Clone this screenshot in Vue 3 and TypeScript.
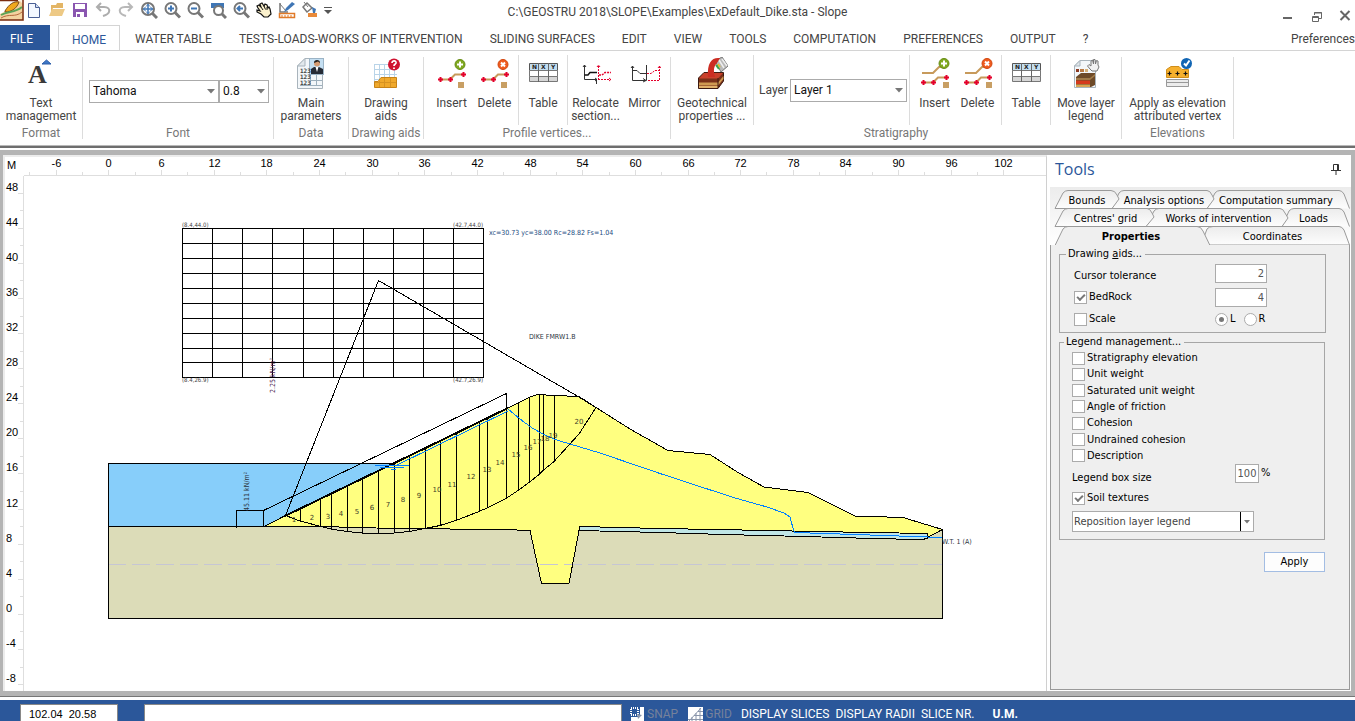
<script setup lang="ts">
import { ref } from 'vue'

type Pt = [number, number]

const menuTabs = ['WATER TABLE', 'TESTS-LOADS-WORKS OF INTERVENTION', 'SLIDING SURFACES', 'EDIT', 'VIEW', 'TOOLS', 'COMPUTATION', 'PREFERENCES', 'OUTPUT', '?']

const fontName = ref('Tahoma')
const fontSize = ref('0.8')
const layer = ref('Layer 1')
const legendAction = ref('Reposition layer legend')
const tolerance = ref('2')
const bedrockValue = ref('4')
const bedrock = ref(true)
const scale = ref(false)
const side = ref('L')
const boxSize = ref('100')
const soilTextures = ref(true)
const coords = ref('102.04  20.58')
const message = ref('')

const legendOptions = ref([
  { id: 'elev', label: 'Stratigraphy elevation', on: false },
  { id: 'unit', label: 'Unit weight', on: false },
  { id: 'sat', label: 'Saturated unit weight', on: false },
  { id: 'angle', label: 'Angle of friction', on: false },
  { id: 'coh', label: 'Cohesion', on: false },
  { id: 'undr', label: 'Undrained cohesion', on: false },
  { id: 'desc', label: 'Description', on: false },
])

/* Rulers: model units to canvas units */
const mx = (v: number) => Math.round(108.3 + v * 8.776) + 0.5
const my = (v: number) => Math.round(613.9 - v * 8.776) + 0.5
const xMajor = Array.from({ length: 19 }, (_, i) => -6 + i * 6)
const xMinor = Array.from({ length: 19 }, (_, i) => -9 + i * 6)
const yMajor = Array.from({ length: 15 }, (_, i) => 48 - i * 4)
const yMinor = Array.from({ length: 14 }, (_, i) => 46 - i * 4)

/* Centres' grid */
const gridX = [182.5, 212.5, 242.5, 272.5, 303.5, 333.5, 363.5, 393.5, 423.5, 453.5, 483.5]
const gridY = [228.5, 243.5, 258.5, 273.5, 288.5, 303.5, 318.5, 333.5, 348.5, 362.5, 377.5]

/* Section geometry */
const surface: Pt[] = [[263, 527], [285.5, 515.5], [508, 408], [529, 397.5], [537, 394.5], [555, 395.5], [579, 396.5], [596, 407.5], [630, 429], [668, 450.5], [710, 454.5], [738, 472.5], [764, 487], [808, 492.5], [855, 516], [903, 517.5], [942.5, 529.5]]
const base: Pt[] = [[108.5, 526.5], [320, 526.5], [395, 528.5], [504, 529.5], [530, 530.5], [541.5, 583.5], [569, 583.5], [579, 530.5]]
const stripTop: Pt[] = [[579.5, 526.5], [660, 528.5], [715, 529.5], [768, 530.5], [815, 531.5], [870, 532.5], [927.5, 533.5]]
const stripBottom: Pt[] = [[927.5, 538], [923, 539.5], [918, 539.5], [873, 538.5], [804, 536.5], [724, 534.5], [660, 532.5], [579, 530.5]]
const slip: Pt[] = [[285.5, 515.5], [300, 521], [321, 526.5], [331, 529], [347, 531.5], [362, 533], [378, 533.5], [394, 533], [409, 531.5], [425, 528.5], [440, 525.5], [456, 520.5], [479, 511.5], [487, 508], [506, 498.5], [518, 490.5], [529, 482.5], [539, 474.5], [543, 470.5], [554, 461.5], [579, 434], [596, 407.5]]
const table: Pt[] = [[508, 409], [520, 419], [532, 428], [543, 434], [555, 439.5], [570, 444], [600, 453], [660, 473.5], [735, 498], [767, 507], [784, 513], [790, 517], [793.5, 530], [795, 532.5], [870, 535], [942, 537.5]]

const path = (p: Pt[]) => p.map((q) => q.join(',')).join(' ')
const at = (line: Pt[], x: number): number => {
  for (let i = 1; i < line.length; i++) {
    const [x0, y0] = line[i - 1]
    const [x1, y1] = line[i]
    if (x >= x0 && x <= x1) return y0 + ((y1 - y0) * (x - x0)) / (x1 - x0)
  }
  return line[line.length - 1][1]
}
const slices = [300.5, 320.5, 331.5, 347.5, 362.5, 378.5, 394.5, 409.5, 425.5, 440.5, 456.5, 479.5, 487.5, 506.5, 518.5, 529.5, 539.5, 543.5, 554.5]
  .map((x) => ({ x, top: at(surface, x), bottom: at(slip, x) }))
const sliceLabels: Pt[] = [[294, 519], [312, 517], [328, 516], [341, 513], [357, 511], [372, 507], [388, 504], [403, 499], [419, 495], [437, 489], [452, 484], [471, 476], [487, 469], [500, 462], [516, 454], [528, 447], [537, 441], [545, 438], [553, 435], [579, 421]]
const dike = path([...surface, [927.5, 537], ...[...stripTop].reverse(), ...[...base].reverse().slice(0, 7), [263, 526.5]] as Pt[])
const soil = path([...base, ...[...stripBottom].reverse(), [942.5, 529.5], [942.5, 618.5], [108.5, 618.5]] as Pt[])
const strip = path([...stripTop, ...stripBottom])
</script>

<template>
  <div class="app">
    <header class="titlebar">
      <div class="quick">
        <svg class="logo" viewBox="0 0 24 21"><rect width="24" height="21" fill="#fdf3e2" /><path d="M0 0H16L6 12L0 14Z" fill="#fff" /><path d="M0 14L8 10L14 2L20 1L23 4V20H0Z" fill="#f3d3a0" /><path d="M5 11C9 4 14 1 19 2C17 8 12 12 5 12Z" fill="#f0a81e" stroke="#7a4a1a" /><path d="M1 15C8 11 15 13 22 7" stroke="#5ba356" stroke-width="2" fill="none" /><path d="M1 18C9 13 15 18 22 12" stroke="#b56a3c" fill="none" /><path d="M0 20H23V0M0 .500H18" stroke="#7a2c12" stroke-width="1.500" fill="none" /></svg>
        <button aria-label="New"><svg viewBox="0 0 18 18"><path d="M3.500 2.500H10.500L14.500 6.500V16.500H3.500Z" fill="#f4f8ff" stroke="#4a5f94" /><path d="M10.500 2.500V6.500H14.500" fill="#cfdcf2" stroke="#4a5f94" /></svg></button>
        <button aria-label="Open"><svg viewBox="0 0 18 18"><path d="M3 4H8L9 2H15V7H5L3 12Z" fill="#e3b565" /><path d="M1 15L4 8H17L14 15Z" fill="#edc985" /></svg></button>
        <button aria-label="Save"><svg viewBox="0 0 18 18"><path d="M2 2H16V16H2Z" fill="#8a56b0" /><path d="M4 3H14V8H4Z" fill="#fff" /><path d="M5 11H13V16H5Z" fill="#fff" /><path d="M6 13H9V16H6Z" fill="#8a56b0" /></svg></button>
        <button aria-label="Undo"><svg viewBox="0 0 18 18" fill="none" stroke="#adadad" stroke-width="2"><path d="M7 2L3 6L7 10M3 6H10C14 6 16 8 15 11C14.500 13 12 14 9 15" /></svg></button>
        <button aria-label="Redo"><svg viewBox="0 0 18 18" fill="none" stroke="#b8b8b8" stroke-width="2"><path d="M11 2L15 6L11 10M15 6H8C4 6 2 8 3 11C3.500 13 6 14 9 15" /></svg></button>
        <button aria-label="Zoom extents"><svg viewBox="0 0 18 18" fill="none"><circle cx="8" cy="8" r="6" stroke="#777" stroke-width="2" /><path d="M12.500 12.500L17 17" stroke="#777" stroke-width="3" /><path d="M8 3V13M3 8H13" stroke="#3f76b5" stroke-width="1.500" /><path d="M6 5.500L8 3.500L10 5.500M6 10.500L8 12.500L10 10.500M5.500 6L3.500 8L5.500 10M10.500 6L12.500 8L10.500 10" stroke="#3f76b5" /></svg></button>
        <button aria-label="Zoom in"><svg viewBox="0 0 18 18" fill="none"><circle cx="8" cy="7.500" r="5.500" stroke="#777" stroke-width="2" /><path d="M12 11.500L17 16.500" stroke="#777" stroke-width="3" /><path d="M8 4.500V10.500M5 7.500H11" stroke="#3f76b5" stroke-width="2" /></svg></button>
        <button aria-label="Zoom out"><svg viewBox="0 0 18 18" fill="none"><circle cx="8" cy="7.500" r="5.500" stroke="#777" stroke-width="2" /><path d="M12 11.500L17 16.500" stroke="#777" stroke-width="3" /><path d="M5 7.500H11" stroke="#3f76b5" stroke-width="2" /></svg></button>
        <button aria-label="Zoom window"><svg viewBox="0 0 18 18" fill="none"><path d="M2 2H15V7H2Z" fill="#3f76b5" /><circle cx="9.500" cy="9.500" r="4.500" fill="#fff" stroke="#777" stroke-width="2" /><path d="M13 13L17 17" stroke="#777" stroke-width="3" /></svg></button>
        <button aria-label="Zoom previous"><svg viewBox="0 0 18 18" fill="none"><circle cx="8" cy="7.500" r="5.500" stroke="#777" stroke-width="2" /><path d="M12 11.500L17 16.500" stroke="#777" stroke-width="3" /><path d="M5 7.500H11M8 5L5.500 7.500L8 10" stroke="#3f76b5" stroke-width="2" /></svg></button>
        <button aria-label="Pan"><svg viewBox="0 0 18 18"><path d="M3 7L2 5L4 4L6 6L5 3L7 2L9 5L10 3L12 4L13 7L14 6L15 8L16 13L13 16H9L6 13L2 11V9L5 10Z" fill="#fbf1cd" stroke="#111" stroke-width="1.200" /><path d="M6 6L8 9M9 5L10.500 8.500M12 6V9" stroke="#111" /></svg></button>
        <button aria-label="Measure"><svg viewBox="0 0 18 18" fill="none"><path d="M2 2V11H10" stroke="#777" stroke-width="1.500" /><path d="M2 3L8 10" stroke="#777" /><path d="M6 11L8 7L14 1L17 3L10 9Z" fill="#3f76b5" /><path d="M1.500 12.500H16.500V16.500H1.500Z" stroke="#e07a28" stroke-width="1.500" /><path d="M4 14V17M7 14V17M10 14V17M13 14V17" stroke="#e07a28" /></svg></button>
        <button aria-label="Fill"><svg viewBox="0 0 18 18" fill="none"><path d="M2 6L6 2L11 7L6 11Z" stroke="#777" stroke-width="1.500" /><path d="M3 1L7 6" stroke="#777" /><path d="M11 6L15 8L14 12H12Z" fill="#3f76b5" /><path d="M7 12H16V16H7Z" fill="#e98a3a" /></svg></button>
        <button class="narrow" aria-label="Customize toolbar"><svg viewBox="0 0 10 18"><path d="M1 6.500H9" stroke="#555" /><path d="M1 9H9L5 13Z" fill="#555" /></svg></button>
      </div>
      <h1>C:\GEOSTRU 2018\SLOPE\Examples\ExDefault_Dike.sta - Slope</h1>
      <div class="winbtns">
        <button aria-label="Minimize"><svg viewBox="0 0 12 12"><path d="M2 8H11" stroke="#666" stroke-width="2" /></svg></button>
        <button aria-label="Restore"><svg viewBox="0 0 12 12" fill="none" stroke="#666"><path d="M4.500 5V2.500H11.500V8.500H9" /><path d="M4 3H12" /><path d="M2.500 6.500H8.500V11.500H2.500ZM2.500 7.500H8.500" /></svg></button>
        <button aria-label="Close"><svg viewBox="0 0 12 12"><path d="M1.500 1L10.500 10M10.500 1L1.500 10" stroke="#666" stroke-width="2" /></svg></button>
      </div>
    </header>

    <nav class="tabs">
      <button class="file">FILE</button>
      <button class="home">HOME</button>
      <button v-for="t in menuTabs" :key="t" class="tab">{{ t }}</button>
      <button class="prefs">Preferences</button>
    </nav>

    <section class="ribbon">
      <div class="group w-format">
        <div class="items">
          <button class="tool">
            <svg viewBox="0 0 32 32"><text x="3" y="26" class="glyph-a">A</text><path d="M17 7L21.500 3L26 7Z" fill="#3d78c8" stroke="#2a5ca8" /></svg>
            <span>Text<br />management</span>
          </button>
        </div>
        <p>Format</p>
      </div>
      <div class="group w-font">
        <div class="items fields">
          <span class="combo name"><select v-model="fontName" aria-label="Font name"><option>Tahoma</option></select><svg viewBox="0 0 8 5"><path d="M0 0H8L4 4.500Z" fill="#777" /></svg></span>
          <span class="combo size"><select v-model="fontSize" aria-label="Font size"><option>0.8</option></select><svg viewBox="0 0 8 5"><path d="M0 0H8L4 4.500Z" fill="#777" /></svg></span>
        </div>
        <p>Font</p>
      </div>
      <div class="group w-data">
        <div class="items">
          <button class="tool">
            <svg viewBox="0 0 32 32"><path d="M2.500 9L10 1.500H27.500V31.500H2.500Z" fill="#f3f7fa" stroke="#a9b4bc" /><path d="M2.500 9H10V1.500Z" fill="#e2e8ec" stroke="#a9b4bc" /><path d="M15 17.500H27M15 23.500H27M5 28.500H27M21.500 17V29M15.500 17V29" stroke="#9db0bd" /><rect x="14.500" y="1.500" width="14" height="16" fill="#c4dff2" stroke="#9cb4c6" /><path d="M16 17V12L19 10H24L28 12V17Z" fill="#252b35" /><path d="M20.500 10L22 15L23.500 10Z" fill="#fff" /><circle cx="22" cy="6.500" r="3" fill="#d69c72" /><path d="M19 6C18.500 2 25.500 2 25 6L23 4.500Z" fill="#222" /><g class="tiny-num"><text x="5" y="16">123</text><text x="5" y="22">123</text><text x="5" y="28">123</text></g></svg>
            <span>Main<br />parameters</span>
          </button>
        </div>
        <p>Data</p>
      </div>
      <div class="group w-data">
        <div class="items">
          <button class="tool">
            <svg viewBox="0 0 32 32"><path d="M4.500 7V30M9.500 7V30M14.500 7V30M19.500 7V30M24.500 7V30M4 7.500H27M4 12.500H27M4 17.500H27M4 22.500H27" stroke="#b9d4e8" /><path d="M4.500 30.500V24.500H8L11 20.500H26.500V30.500Z" fill="#f0a92c" stroke="#c78317" /><path d="M9.500 24V30M14.500 21V30M20.500 21V30M5 25.500H26" stroke="#d79322" /><circle cx="24" cy="7.500" r="6" fill="#cf1230" /><path d="M22 6C22 3 26.500 3.500 26 6C25.500 7.500 24 7 24 9M24 10.500V12" fill="none" stroke="#fff" stroke-width="1.700" /></svg>
            <span>Drawing<br />aids</span>
          </button>
        </div>
        <p>Drawing aids</p>
      </div>
      <div class="group w-profile">
        <div class="items padded">
          <button class="tool edit">
            <svg viewBox="0 0 32 32"><path d="M4 22.500H14L19 17.500H28" fill="none" stroke="#c79a5b" stroke-width="2" /><path d="M2 22.500H7M4.500 20V25M12 22.500H17M14.500 20V25M25 17.500H30M27.500 15V20" stroke="#e4002b" stroke-width="2" /><rect x="22" y="25" width="6" height="6" fill="#c89f64" /><circle cx="24" cy="7.500" r="5" fill="#7fa81f" stroke="#688d16" /><path d="M24 4.500V10.500M21 7.500H27" stroke="#fff" stroke-width="2" /></svg>
            <span>Insert</span>
          </button>
          <button class="tool edit">
            <svg viewBox="0 0 32 32"><path d="M4 22.500H14L19 17.500H28" fill="none" stroke="#c79a5b" stroke-width="2" /><path d="M2 22.500H7M4.500 20V25M12 22.500H17M14.500 20V25M25 17.500H30M27.500 15V20" stroke="#e4002b" stroke-width="2" /><rect x="22" y="25" width="6" height="6" fill="#c89f64" /><circle cx="24" cy="7.500" r="5" fill="#ef5b1e" stroke="#d2460e" /><path d="M22 5.500L26 9.500M26 5.500L22 9.500" stroke="#fff" stroke-width="2" /></svg>
            <span>Delete</span>
          </button>
          <i class="sep" />
          <button class="tool table">
            <svg viewBox="0 0 32 32"><path d="M2.500 6.500H30.500V13.500H2.500Z" fill="#c3def0" stroke="#555" /><path d="M2.500 13.500H30.500V19.500H2.500Z" fill="#fff" stroke="#777" /><path d="M2.500 19.500H30.500V24.500H2.500Z" fill="#d6d6d6" stroke="#777" /><path d="M11.500 6V25M21.500 6V25" stroke="#666" /><g class="tiny-head"><text x="5" y="12">N</text><text x="14" y="12">X</text><text x="24" y="12">Y</text></g></svg>
            <span>Table</span>
          </button>
          <i class="sep" />
          <button class="tool relocate">
            <svg viewBox="0 0 32 32" fill="none"><path d="M4.500 8V22.500H17M3 10L4.500 8L6 10M15 21L17 22.500L15 24M16.500 22V27" stroke="#333" /><path d="M4.500 18H8L10 15.500H17" stroke="#111" stroke-width="1.500" /><path d="M18.500 23V8M17 10L18.500 8L20 10M18 22.500H31M29 21L31 22.500L29 24" stroke="#e4002b" stroke-dasharray="2 1" /><path d="M19 18H22L25 15.500H31" stroke="#e4002b" stroke-dasharray="2 1" stroke-width="1.500" /></svg>
            <span>Relocate<br />section...</span>
          </button>
          <button class="tool relocate">
            <svg viewBox="0 0 32 32" fill="none"><path d="M3.500 9V23.500H17.500V8M2 11L3.500 9L5 11M14 21.500L17 23.500L14 25" stroke="#333" /><path d="M4 13.500H8L11 16.500H18" stroke="#333" /><path d="M18 16.500H22L26 13.500H30M30.500 9V23.500H18M29 11L30.500 9L32 11" stroke="#e4002b" stroke-dasharray="2 1" /></svg>
            <span>Mirror</span>
          </button>
        </div>
        <p>Profile vertices...</p>
      </div>
      <div class="group w-strat">
        <div class="items">
          <button class="tool geo">
            <svg viewBox="0 0 32 32"><path d="M2.500 21L8 15.500H27.500V24L22 31.500H2.500Z" fill="#7a3019" stroke="#3c1a10" /><path d="M3 21.500H22L27 16H8Z" fill="#c9402a" /><path d="M3 25.500H22L27.500 19V22L22 28.500H3Z" fill="#cf9a52" /><path d="M3 29H22V31H3Z" fill="#e0b06a" /><path d="M22 21V31" stroke="#3c1a10" /><path d="M19 4L26 0L32 9L25 15Z" fill="#b9b9b9" stroke="#777" /><path d="M23 3L28 11M26 2L31 9" stroke="#eee" stroke-width="1.500" /><path d="M24 1C16 0 11 5 12 20H19C17 13 18 9 21 6Z" fill="#cc2d22" /><path d="M20 8L23 12" stroke="#3aa84a" stroke-width="2" /><path d="M22 7L24 10" stroke="#e8c020" stroke-width="1.500" /></svg>
            <span>Geotechnical<br />properties ...</span>
          </button>
          <i class="sep" />
          <div class="layerbox">
            <label for="layer">Layer</label>
            <span class="combo layer"><select id="layer" v-model="layer"><option>Layer 1</option></select><svg viewBox="0 0 8 5"><path d="M0 0H8L4 4.500Z" fill="#777" /></svg></span>
          </div>
          <i class="sep" />
          <button class="tool edit">
            <svg viewBox="0 0 32 32"><path d="M3 16H14L20 10H27M4 25.500H14L19 20.500H28" fill="none" stroke="#c79a5b" stroke-width="2" /><path d="M2 25.500H7M4.500 23V28M12 25.500H17M14.500 23V28M25 20.500H30M27.500 18V23" stroke="#e4002b" stroke-width="2" /><rect x="24" y="25" width="6" height="6" fill="#c89f64" /><circle cx="25" cy="6.500" r="5" fill="#7fa81f" stroke="#688d16" /><path d="M25 3.500V9.500M22 6.500H28" stroke="#fff" stroke-width="2" /></svg>
            <span>Insert</span>
          </button>
          <button class="tool edit">
            <svg viewBox="0 0 32 32"><path d="M3 16H14L20 10H27M4 25.500H14L19 20.500H28" fill="none" stroke="#c79a5b" stroke-width="2" /><path d="M2 25.500H7M4.500 23V28M12 25.500H17M14.500 23V28M25 20.500H30M27.500 18V23" stroke="#e4002b" stroke-width="2" /><rect x="24" y="25" width="6" height="6" fill="#c89f64" /><circle cx="25" cy="6.500" r="5" fill="#ef5b1e" stroke="#d2460e" /><path d="M23 4.500L27 8.500M27 4.500L23 8.500" stroke="#fff" stroke-width="2" /></svg>
            <span>Delete</span>
          </button>
          <i class="sep" />
          <button class="tool table">
            <svg viewBox="0 0 32 32"><path d="M2.500 6.500H30.500V13.500H2.500Z" fill="#c3def0" stroke="#555" /><path d="M2.500 13.500H30.500V19.500H2.500Z" fill="#fff" stroke="#777" /><path d="M2.500 19.500H30.500V24.500H2.500Z" fill="#d6d6d6" stroke="#777" /><path d="M11.500 6V25M21.500 6V25" stroke="#666" /><g class="tiny-head"><text x="5" y="12">N</text><text x="14" y="12">X</text><text x="24" y="12">Y</text></g></svg>
            <span>Table</span>
          </button>
          <i class="sep" />
          <button class="tool move">
            <svg viewBox="0 0 32 32"><path d="M4.500 9L10 3.500H25.500V30.500H4.500Z" fill="#f3f7fa" stroke="#a9b4bc" /><path d="M4.500 9H10V3.500Z" fill="#dfe5ea" stroke="#a9b4bc" /><rect x="6" y="12" width="3" height="3" fill="#8c3b23" /><rect x="10" y="12" width="4" height="3" fill="#b97a45" /><rect x="15" y="12" width="3" height="3" fill="#d8b27a" /><path d="M6 20L11 16H25V28L21 30H6Z" fill="#6e4a28" /><path d="M6 21H20L25 17V19L20 23H6Z" fill="#a07a48" /><path d="M6 23.500H20V27H6Z" fill="#d63a1c" /><path d="M6 27.500H20V30H6Z" fill="#d9a552" /><path d="M20 12L17.500 9L19 7.500L21 9V4L22.500 3L23.500 7V2.500H25L25.500 7L26.500 3.500L28 4V8L29 10L27 14H22Z" fill="#f2f2f2" stroke="#777" /></svg>
            <span>Move layer<br />legend</span>
          </button>
        </div>
        <p>Stratigraphy</p>
      </div>
      <div class="group w-elev">
        <div class="items">
          <button class="tool">
            <svg viewBox="0 0 32 32"><path d="M4.500 20.500V12.500L9 9.500H17L20 12.500H26.500V20.500Z" fill="#f6b02d" stroke="#d08e1a" /><path d="M5.500 16.500H9.500M7.500 14.500V18.500M13.500 16.500H17.500M15.500 14.500V18.500M21.500 16.500H25.500M23.500 14.500V18.500" stroke="#111" stroke-width="1.200" /><path d="M4.500 22.500H26.500V29.500H4.500ZM4.500 25.500H26.500" fill="#ececec" stroke="#999" /><circle cx="24.500" cy="6.500" r="5.500" fill="#1165b4" /><path d="M22 6.500L24 8.500L27.500 3.500" fill="none" stroke="#fff" stroke-width="2" /></svg>
            <span>Apply as elevation<br />attributed vertex</span>
          </button>
        </div>
        <p>Elevations</p>
      </div>
    </section>

    <main class="work">
      <svg class="canvas" role="img" aria-label="Slope section">
        <g transform="translate(-5 -157)">
          <g class="ruler">
            <path d="M24 175.500H1047M23.500 176V691" />
            <path v-for="v in xMajor" :key="'X' + v" :d="`M${mx(v)} 170V175`" />
            <path v-for="v in xMinor" :key="'x' + v" :d="`M${mx(v)} 172V175`" />
            <path v-for="v in yMajor" :key="'Y' + v" :d="`M18 ${my(v)}H23`" />
            <path v-for="v in yMinor" :key="'y' + v" :d="`M20 ${my(v)}H23`" />
          </g>
          <g class="ruler-text">
            <text x="7" y="169" class="unit">M</text>
            <text v-for="v in xMajor" :key="'tx' + v" :x="mx(v)" y="167" text-anchor="middle">{{ v }}</text>
            <text v-for="v in yMajor" :key="'ty' + v" x="6" :y="my(v) - 3">{{ v }}</text>
          </g>
          <polygon points="108.500,463.500 396,463.500 263,527 108.500,527" fill="#87cefa" />
          <polygon :points="soil" fill="#dcdcb8" />
          <polygon :points="dike" fill="#ffff80" />
          <polygon :points="strip" fill="#c0e6e6" />
          <path d="M108 564.500H942" stroke="#c6c6d4" stroke-dasharray="18 6" class="crisp" />
          <g class="outline">
            <path d="M108.500 526V463.500H394M108.500 526V618.500H942.500V529" />
            <polyline :points="path(base)" />
            <polyline :points="path(surface)" />
            <polyline :points="path([...stripTop, ...stripBottom])" />
            <path d="M579.500 526V531M942.500 529.500L928 537" />
            <polyline :points="path(slip)" />
            <path v-for="s in slices" :key="s.x" :d="`M${s.x} ${s.top}V${s.bottom}`" />
            <path d="M285.500 515.500L378.500 280.500L578 396.500L596 407.500" />
            <path d="M236.500 528V510.500H263.500V527M263.500 510.500L506.500 393.500V408" />
            <path v-for="x in gridX" :key="'gx' + x" :d="`M${x} 228V378`" />
            <path v-for="y in gridY" :key="'gy' + y" :d="`M182 ${y}H484`" />
          </g>
          <path d="M285 516L508 408" stroke="#000" stroke-width="2" class="crisp" />
          <g class="water">
            <path d="M375 465.500H409M380 467.500H404M391 469.500H396" />
            <path d="M396 465.500L508 411" />
            <polyline :points="path(table)" />
          </g>
          <g class="slice-text">
            <text v-for="(p, i) in sliceLabels" :key="i" :x="p[0]" :y="p[1] + 3" text-anchor="middle">{{ i + 1 }}</text>
          </g>
          <g class="note">
            <text x="489" y="235" fill="#1a4a80">xc=30.73 yc=38.00 Rc=28.82 Fs=1.04</text>
            <text x="529" y="339">DIKE FMRW1.B</text>
            <text x="942" y="544">W.T. 1 (A)</text>
            <text transform="translate(275 393) rotate(-90)" fill="#4a2050">2.25 kN/m²</text>
            <text transform="translate(249 511) rotate(-90)">45.11 kN/m²</text>
          </g>
          <g class="corner">
            <text x="182" y="227">(8.4,44.0)</text>
            <text x="483" y="227" text-anchor="end">(42.7,44.0)</text>
            <text x="182" y="382">(8.4,26.9)</text>
            <text x="483" y="382" text-anchor="end">(42.7,26.9)</text>
          </g>
        </g>
      </svg>

      <aside class="panel">
        <header>
          <h2>Tools</h2>
          <button aria-label="Pin"><svg viewBox="0 0 10 12" fill="none" stroke="#333"><path d="M2.500 7V1.500H7.500V7M6.500 2V7M0 7.500H10M5 8V12" /></svg></button>
        </header>
        <div class="ptabs">
          <svg class="ptab-shapes" viewBox="0 0 300 58">
            <defs><linearGradient id="tabfill" x1="0" y1="0" x2="0" y2="1"><stop offset="0" stop-color="#ececec" /><stop offset="1" stop-color="#fdfdfd" /></linearGradient></defs>
            <g fill="url(#tabfill)" stroke="#9a9a9a">
              <path d="M157 21.500L165 6Q167 3.500 170 3.500H289Q292 3.500 294 7L299.500 21.500" />
              <path d="M62 21.500L69 6Q71 3.500 74 3.500H157Q160 3.500 162 8L164 12L157 21.500Z" />
              <path d="M5 21.500L13 6Q15 3.500 18 3.500H61Q65 3.500 67 8L69 12L62 21.500Z" />
              <path d="M232 39.500L239 24Q241 21.500 244 21.500H289Q292 21.500 294 25L299.500 39.500" />
              <path d="M96 39.500L104 24Q106 21.500 109 21.500H230Q233 21.500 235 26L238 31L232 39.500Z" />
              <path d="M5 39.500L13 24Q15 21.500 18 21.500H97Q100 21.500 102 26L104 30L96 39.500Z" />
              <path d="M151 58L157 42Q159 39.500 163 39.500H289Q292 39.500 294 43L299.500 58Z" />
              <path d="M0 58.500H5L13 42Q15 39.500 18 39.500H147Q151 39.500 153 44L160 58.500" fill="#efefef" />
            </g>
          </svg>
          <div class="prow top"><button>Bounds</button><button>Analysis options</button><button>Computation summary</button></div>
          <div class="prow mid"><button>Centres' grid</button><button>Works of intervention</button><button>Loads</button></div>
          <div class="prow low"><button class="active">Properties</button><button>Coordinates</button></div>
        </div>
        <form class="pbody" @submit.prevent>
          <fieldset class="aids">
            <legend>Drawing <u>a</u>ids...</legend>
            <label for="tol" class="shift">Cursor tolerance</label>
            <input id="tol" v-model="tolerance" type="text" />
            <label class="check"><input v-model="bedrock" type="checkbox" />BedRock</label>
            <input v-model="bedrockValue" type="text" aria-label="BedRock value" />
            <label class="check"><input v-model="scale" type="checkbox" />Scale</label>
            <span class="radios">
              <label><input v-model="side" type="radio" name="side" value="L" />L</label>
              <label><input v-model="side" type="radio" name="side" value="R" />R</label>
            </span>
          </fieldset>
          <fieldset class="legendset">
            <legend>Legend management...</legend>
            <div class="options">
              <label v-for="o in legendOptions" :key="o.id" class="check"><input v-model="o.on" type="checkbox" />{{ o.label }}</label>
            </div>
            <div class="boxsize">
              <label for="bs">Legend box size</label>
              <span><input id="bs" v-model="boxSize" type="text" />%</span>
            </div>
            <label class="check soil"><input v-model="soilTextures" type="checkbox" />Soil textures</label>
            <span class="combo repos"><select v-model="legendAction" aria-label="Legend action"><option>Reposition layer legend</option></select><svg viewBox="0 0 6 4"><path d="M0 0H6L3 3.500Z" fill="#777" /></svg></span>
          </fieldset>
          <button class="apply" type="submit">Apply</button>
        </form>
      </aside>
    </main>

    <footer class="status">
      <input v-model="coords" class="coords" type="text" aria-label="Cursor coordinates" />
      <input v-model="message" class="message" type="text" aria-label="Message" />
      <button class="off"><svg viewBox="0 0 16 16"><path d="M2 2H9V9H2Z" fill="none" stroke="#fff" stroke-width="2" stroke-dasharray="1 1" /><path d="M11 1H15V15H2V11H9L11 9Z" fill="#fff" /><path d="M8 8L13 9L9 13Z" fill="#8a96ab" /></svg>SNAP</button>
      <button class="off"><svg viewBox="0 0 16 16"><rect x="1" y="1" width="15" height="15" fill="#fff" /><path d="M5 16V11M9 16V7M13 16V2M1 13.500H16M7 9.500H16M11 5.500H16M2 15L14 2" stroke="#8a96ab" fill="none" /></svg>GRID</button>
      <button>DISPLAY SLICES</button>
      <button>DISPLAY RADII</button>
      <button>SLICE NR.</button>
      <button class="um">U.M.</button>
    </footer>
  </div>
</template>

<style>
body { margin: 0; overflow: hidden; }
</style>

<style scoped>
.app { height: 100vh; display: flex; flex-direction: column; background: #fff; overflow: hidden; font: 12px/13px Roboto, "Open Sans", sans-serif; color: #444; }
button { border: 0; background: none; padding: 0; margin: 0; font: inherit; color: inherit; white-space: nowrap; }
select, input { font: inherit; margin: 0; box-sizing: border-box; }
h1, h2, p { margin: 0; font-weight: normal; }

.titlebar { height: 25px; display: grid; grid-template-columns: 1fr auto 1fr; flex: none; }
.quick { display: flex; height: 20px; align-items: center; }
.quick button { width: 23px; height: 20px; display: flex; align-items: center; justify-content: center; }
.quick svg { width: 18px; height: 18px; flex: none; }
.quick .logo { width: 24px; height: 21px; margin-right: -2px; }
.quick .narrow { width: 14px; }
.quick .narrow svg { width: 10px; }
h1 { font-size: 12px; line-height: 24px; }
.winbtns { display: flex; justify-content: flex-end; gap: 17px; padding: 6px 4px 0 0; }
.winbtns svg { width: 12px; height: 12px; display: block; }

.tabs { height: 25px; flex: none; display: flex; align-items: stretch; border-bottom: 1px solid #d4d4d4; overflow: hidden; }
.tabs button { padding-top: 3px; }
.tabs .file { width: 50px; padding-right: 7px; background: #2b579a; color: #fff; margin-right: 8px; }
.home { box-sizing: border-box; width: 62px; height: 26px; border: 1px solid #d4d4d4; border-bottom: 0; color: #2b579a; background: #fff; }
.tab { margin-left: 27px; }
.home + .tab { margin-left: 15px; }
.prefs { margin-left: auto; }

.ribbon { height: 94px; flex: none; display: flex; border-bottom: 1px solid #b8b8b8; box-shadow: 0 2px 0 #6e6e6e; margin-bottom: 4px; overflow: visible; }
.group { box-sizing: border-box; height: 82px; margin-top: 6px; border-right: 1px solid #dcdcdc; display: flex; flex-direction: column; justify-content: space-between; }
.group p { text-align: center; color: #777; line-height: 11px; }
.items { display: flex; height: 68px; }
.padded { padding-left: 6px; }
.w-format { width: 83px; }
.w-font { width: 191px; }
.w-data { width: 75px; }
.w-profile { width: 247px; }
.w-strat { width: 451px; }
.w-elev { width: 112px; }
.tool { flex: 1; display: flex; flex-direction: column; align-items: center; gap: 8px; }
.tool svg { width: 32px; height: 32px; flex: none; }
.tool.edit { flex: 0 0 43px; }
.edit + .sep { margin-left: 2px; }
.tool.table { flex: 0 0 48px; }
.tool.geo { flex: 0 0 82px; }
.tool.relocate { flex: 0 0 49px; }
.sep + .relocate { margin-left: 3px; }
.sep { width: 1px; background: #dcdcdc; height: 70px; flex: none; margin-top: -2px; }
.layerbox + .sep { margin-right: 3px; }
.fields { align-items: center; padding-left: 6px; }
.layerbox { flex: 0 0 155px; display: flex; align-items: center; justify-content: space-between; padding: 0 2px 2px 5px; box-sizing: border-box; }
.combo { position: relative; display: block; }
.combo select { appearance: none; width: 100%; height: 23px; border: 1px solid #ababab; border-radius: 0; background: #fff; color: #111; padding: 0 3px; display: block; }
.combo svg { position: absolute; right: 4px; top: 9px; width: 8px; height: 5px; pointer-events: none; }
.combo.name { width: 130px; }
.combo.size { width: 50px; }
.combo.layer { width: 117px; }
.glyph-a { font: bold 26px "Liberation Serif", serif; fill: #3a3a3a; }
.tiny-num { font: bold 6px "DejaVu Sans Mono", monospace; fill: #444; }
.tiny-head { font: bold 6px "DejaVu Sans", sans-serif; fill: #222; }

.work { flex: 1; min-height: 0; display: flex; background: #b4b4b4; padding: 5px 4px 5px 3px; border-bottom: 1px solid #777; margin-bottom: 3px; }
.canvas { flex: 1; min-width: 0; height: auto; background: #fff; border: 2px solid #ececec; border-right: 1px solid #d0d0d0; border-bottom: 0; overflow: hidden; }
.crisp, .outline, .water, .ruler { shape-rendering: crispEdges; }
.ruler { stroke: #dedede; fill: none; }
.ruler-text { font: 11px "Liberation Sans", Arial, sans-serif; fill: #000; }
.outline { stroke: #000; fill: none; }
.water { stroke: #0080ff; fill: none; }
.slice-text { font: 7px "DejaVu Sans", sans-serif; fill: #3c3c28; }
.note { font: 7px "DejaVu Sans Condensed", "DejaVu Sans", sans-serif; fill: #2c3440; }
.corner { font: 6px "DejaVu Sans Condensed", "DejaVu Sans", sans-serif; fill: #444; }

.panel { width: 304px; flex: none; background: #fff; display: flex; flex-direction: column; font: 11px/14px "DejaVu Sans Condensed", "Noto Sans", sans-serif; color: #000; }
.panel > header { height: 32px; display: flex; align-items: center; justify-content: space-between; padding: 0 10px 4px 8px; box-sizing: border-box; }
.panel h2 { font: 16px/22px "Open Sans", "Noto Sans", sans-serif; color: #2b579a; }
.panel header svg { width: 10px; height: 12px; display: block; }
.ptabs { position: relative; height: 58px; margin-left: 3px; padding-top: 4px; box-sizing: border-box; background: linear-gradient(#ececec, #fff); }
.ptab-shapes { position: absolute; left: 0; top: 0; width: 300px; height: 58px; }
.prow { position: relative; display: grid; height: 18px; }
.prow button { padding-top: 2px; }
.prow.top { grid-template-columns: 72px 82px 1fr; padding: 0 4px 0 1px; }
.prow.mid { grid-template-columns: 111px 115px 1fr; }
.prow.low { grid-template-columns: 162px 1fr; padding-right: 18px; }
.active { font-weight: bold; }
.pbody { flex: 1; margin: 0 1px 1px 3px; padding: 2px 23px 0 8px; background: #efefef; border: 1px solid #9a9a9a; border-top: 0; display: flex; flex-direction: column; }
fieldset { border: 1px solid #a6a6a6; margin: 0; padding: 0; min-width: 0; }
legend { margin-left: -8px; padding: 0 3px 0 2px; }
.aids { display: grid; grid-template-columns: 141px 52px; grid-template-rows: 24px 24px 20px; align-items: center; padding-left: 14px; height: 86px; box-sizing: border-box; }
.aids .shift { padding-top: 6px; }
fieldset input[type='text'] { height: 19px; width: 52px; border: 1px solid #ababab; background: #fff; color: #555; text-align: right; padding: 0 2px; }
.check { display: flex; align-items: center; gap: 2px; }
input[type='checkbox'] { appearance: none; width: 13px; height: 13px; border: 1px solid #ababab; background: #fff; display: grid; place-items: center; flex: none; }
input[type='checkbox']:checked::after { content: ''; width: 6px; height: 3px; border: solid #777; border-width: 0 0 2px 2px; transform: translateY(-1px) rotate(-45deg); }
.radios { display: flex; gap: 8px; }
.radios label { display: flex; align-items: center; gap: 2px; }
input[type='radio'] { appearance: none; width: 13px; height: 13px; border: 1px solid #ababab; border-radius: 50%; background: #fff; display: grid; place-items: center; flex: none; }
input[type='radio']:checked::after { content: ''; width: 5px; height: 5px; border-radius: 50%; background: #777; }
.legendset { margin: 2px 1px 0 0; padding: 1px 0 7px 12px; }
.options { display: grid; height: 114px; grid-auto-rows: 1fr; }
.boxsize { display: grid; grid-template-columns: 163px auto; align-items: end; height: 21px; }
.boxsize input[type='text'] { width: 24px; padding: 0; text-align: center; margin-right: 2px; }
.boxsize span { display: flex; align-self: start; line-height: 17px; }
.soil { height: 26px; }
.repos { width: 182px; }
.repos select { height: 21px; color: #444; background: linear-gradient(90deg, transparent 167px, #000 167px, #000 168px, transparent 168px) #fff; padding: 0 1px; }
.repos svg { width: 6px; height: 4px; right: 4px; top: 9px; }
.apply { align-self: flex-end; width: 61px; height: 20px; margin-top: 12px; margin-right: 1px; border: 1px solid #a3bde3; background: #fdfdfd; }

.status { height: 21px; flex: none; background: #2b579a; color: #fff; display: flex; padding-top: 4px; box-sizing: border-box; overflow: hidden; }
.status input { height: 20px; border: 1px solid #888; background: #fff; border-radius: 0; color: #000; font: 11px "Liberation Sans", Arial, sans-serif; white-space: pre; }
.coords { width: 98px; margin-left: 20px; padding: 0 8px; }
.message { width: 478px; margin: 0 7px 0 26px; }
.status button { height: 20px; display: flex; align-items: center; margin-right: 6px; gap: 2px; }
.status svg { width: 16px; height: 16px; }
.status .off { color: #76819a; margin-right: 9px; }
.status .um { font-weight: bold; margin-left: 12px; }
</style>
